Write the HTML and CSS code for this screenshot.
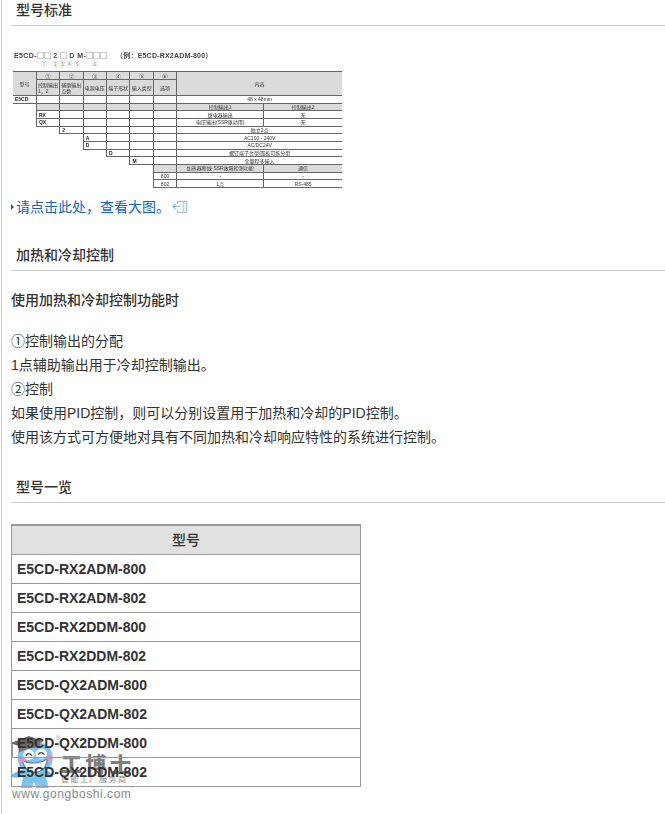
FILE: index.html
```html
<!DOCTYPE html>
<html lang="zh-CN">
<head>
<meta charset="utf-8">
<title>E5CD</title>
<link rel="stylesheet" href="styles.css">
</head>
<body>
<aside class="mark">
  <svg class="mascot" width="46" height="56" viewBox="0 0 44 54" aria-hidden="true">
    <path d="M15 33c-5 1-11 3-14 7 4 2 10 1 15-1zM33 33c4 1 8 3 10 7-4 2-8 1-11-1z" fill="#6fbce8"/>
    <path d="M15 34h19l4 17H26l-2-6-2 6H11z" fill="#7cc5ee"/>
    <ellipse cx="25" cy="22" rx="17" ry="16" fill="#7cc5ee"/>
    <path d="M1 8L19 1l14 5-16 7z" fill="#666"/>
    <path d="M3 9v12" stroke="#777" stroke-width="1" fill="none"/>
    <path d="M9 11v6q9-5 21-5V7z" fill="#777"/>
    <ellipse cx="19" cy="19" rx="5.500" ry="5" fill="#fff"/>
    <ellipse cx="31" cy="18" rx="5.500" ry="5" fill="#fff"/>
    <path d="M16 20q3-4 6 0M28 19q3-4 6 0" stroke="#444" stroke-width="1.300" fill="none"/>
    <path d="M13 25q12 5 24-2q-2 13-12 13t-12-11z" fill="#fff" stroke="#4f768e" stroke-width="1"/>
    <ellipse cx="12" cy="24" rx="3" ry="2.500" fill="#f08cba"/>
    <ellipse cx="39" cy="22" rx="3" ry="2.500" fill="#f08cba"/>
  </svg>
  <span class="mark-reg">®</span>
  <span class="mark-name">工博士</span>
  <span class="mark-sub">智能工厂服务商</span>
  <span class="mark-url">www.gongboshi.com</span>
</aside>
<main class="page">
  <h2 class="heading">型号标准</h2>
  <section class="figure">
    <div class="code">
      <span class="code-main">E5CD-<span class="box">□□</span> 2 <span class="box">□</span> D M-<span class="box">□□□</span></span>
      <span class="code-eg">（例：E5CD-RX2ADM-800）</span>
    </div>
    <div class="code-nums"><span class="num-a">①</span><span class="num-b">②③④⑤</span><span>⑥</span></div>
    <table class="spec">
      <colgroup>
        <col class="c0"><col class="cn"><col class="cn"><col class="cn"><col class="cn"><col class="cn"><col class="cn"><col class="c7"><col class="c8">
      </colgroup>
      <tr class="r8">
        <th rowspan="2">型号</th><th>①</th><th>②</th><th>③</th><th>④</th><th>⑤</th><th>⑥</th>
        <th rowspan="2" colspan="2">内容</th>
      </tr>
      <tr class="r16">
        <th class="l">控制输出<br>1，2</th><th class="l">辅助输出<br>点数</th><th>电源电压</th><th>端子形状</th><th>输入类型</th><th>选项</th>
      </tr>
      <tr><td class="b">E5CD</td><td></td><td></td><td></td><td></td><td></td><td></td><td colspan="2" class="m">48 x 48mm</td></tr>
      <tr><td class="n"></td><th></th><th></th><th></th><th></th><th></th><th></th><th>控制输出1</th><th>控制输出2</th></tr>
      <tr><td class="n"></td><td class="b">RX</td><td></td><td></td><td></td><td></td><td></td><td class="m">继电器输出</td><td class="m">无</td></tr>
      <tr><td class="n"></td><td class="b">QX</td><td></td><td></td><td></td><td></td><td></td><td class="m">电压输出(SSR驱动用)</td><td class="m">无</td></tr>
      <tr><td class="n" colspan="2"></td><td class="b">2</td><td></td><td></td><td></td><td></td><td colspan="2" class="m">独立2点</td></tr>
      <tr><td class="n" colspan="3"></td><td class="b">A</td><td></td><td></td><td></td><td colspan="2" class="m">AC100 - 240V</td></tr>
      <tr><td class="n" colspan="3"></td><td class="b">D</td><td></td><td></td><td></td><td colspan="2" class="m">AC/DC24V</td></tr>
      <tr><td class="n" colspan="4"></td><td class="b">D</td><td></td><td></td><td colspan="2" class="m">螺钉端子台型/面板可拆分型</td></tr>
      <tr><td class="n" colspan="5"></td><td class="b">M</td><td></td><td colspan="2" class="m">全量程多输入</td></tr>
      <tr><td class="n" colspan="6"></td><th></th><th>加热器断线·SSR故障检测功能</th><th>通信</th></tr>
      <tr><td class="n" colspan="6"></td><td class="m">800</td><td class="m">-</td><td class="m">-</td></tr>
      <tr><td class="n" colspan="6"></td><td class="m">802</td><td class="m">1点</td><td class="m">RS-485</td></tr>
    </table>
  </section>
  <p class="more">
    <span class="arrow"></span><a class="more-link" href="#">请点击此处，查看大图。</a>
    <svg class="zoom-ic" width="16" height="14" viewBox="0 0 16 14" aria-hidden="true">
      <path d="M5.500 4V1.500h9v11h-9V9.500" fill="none" stroke="#9cc1dc" stroke-width="1"/>
      <path d="M11.500 2v10.500" fill="none" stroke="#b5d2e6" stroke-width="1.500"/>
      <path d="M1 6.500h7M3.500 4L1 6.500 3.500 9" fill="none" stroke="#8fb9d8" stroke-width="1.200"/>
    </svg>
  </p>

  <h2 class="heading second">加热和冷却控制</h2>
  <p class="lead">使用加热和冷却控制功能时</p>
  <div class="body-text">
    <p>①控制输出的分配</p>
    <p>1点辅助输出用于冷却控制输出。</p>
    <p>②控制</p>
    <p>如果使用PID控制，则可以分别设置用于加热和冷却的PID控制。</p>
    <p>使用该方式可方便地对具有不同加热和冷却响应特性的系统进行控制。</p>
  </div>

  <h2 class="heading third">型号一览</h2>
  <table class="models">
    <tr><th>型号</th></tr>
    <tr><td>E5CD-RX2ADM-800</td></tr>
    <tr><td>E5CD-RX2ADM-802</td></tr>
    <tr><td>E5CD-RX2DDM-800</td></tr>
    <tr><td>E5CD-RX2DDM-802</td></tr>
    <tr><td>E5CD-QX2ADM-800</td></tr>
    <tr><td>E5CD-QX2ADM-802</td></tr>
    <tr><td>E5CD-QX2DDM-800</td></tr>
    <tr><td>E5CD-QX2DDM-802</td></tr>
  </table>
</main>
</body>
</html>
```
FILE: styles.css
```css
* { box-sizing: border-box; }
html, body { margin: 0; padding: 0; height: 100%; overflow: hidden; background: #fff; }
body { position: relative; font-family: "Liberation Sans", "Noto Sans CJK SC", sans-serif; font-size: 14px; color: #333; }
.page { position: relative; z-index: 1; margin-left: 1px; border-left: 1px solid #ccc; padding-left: 9px; height: 814px; }
.heading { margin: 0; padding: 0 0 0 5px; height: 26px; border-bottom: 1px solid #ccc; font-size: 14px; line-height: 21px; font-weight: 500; color: #333; }
.figure { padding: 25px 0 0 2px; height: 169px; }
.code { height: 9px; padding-left: 1px; line-height: 9px; font-size: 7px; font-weight: 700; color: #444; white-space: nowrap; filter: blur(.2px); }
.code-main { letter-spacing: .4px; }
.box { font-family: "Noto Sans CJK SC", sans-serif; font-weight: 400; letter-spacing: 0; }
.code-eg { margin-left: 7px; letter-spacing: .2px; }
.code-nums { display: flex; height: 9px; padding-left: 28px; line-height: 9px; font-size: 6px; color: #888; white-space: nowrap; }
.num-a { width: 11px; }
.num-b { width: 40px; letter-spacing: 1.300px; }
.spec { margin-top: 2px; width: 329px; border-collapse: collapse; table-layout: fixed; font-size: 5px; line-height: 6px; color: #333; filter: blur(.35px); }
.c0 { width: 23.400px; }
.cn { width: 23.400px; }
.c7 { width: 87px; }
.c8 { width: 78.200px; }
.spec tr { height: 7.670px; }
.spec .r8 { height: 8px; }
.spec .r16 { height: 16px; }
.spec th, .spec td { padding: 0; border: 1px solid #666; overflow: hidden; white-space: nowrap; font-weight: 400; text-align: center; }
.spec tr > :first-child { border-left: 0; }
.spec tr > :last-child { border-right: 0; }
.spec th { background: repeating-conic-gradient(#c4c4c4 0 25%, #f2f2f2 0 50%) 0 0 / 2px 2px; color: #333; }
.spec th.l { text-align: left; padding-left: 1px; }
.spec td.b { text-align: left; padding-left: 2px; font-weight: 700; color: #222; }
.spec td.n { border-top: 0; border-bottom: 0; }
.more { display: flex; align-items: center; margin: 0; height: 24px; }
.arrow { width: 0; height: 0; margin-right: 2px; border-left: 3px solid #2a5d8f; border-top: 3px solid transparent; border-bottom: 3px solid transparent; }
.more-link { display: block; padding-bottom: 2px; color: #1665c1; text-decoration: none; }
.zoom-ic { margin-left: 2px; }
.second { margin-top: 26px; }
.lead { margin: 0; height: 57px; padding-top: 19px; line-height: 20px; font-weight: 500; }
.body-text { height: 122px; padding-top: 1px; }
.body-text p { margin: 0; height: 24px; line-height: 24px; }
.third { margin-top: 27px; }
.models { margin-top: 21px; width: 350px; border-collapse: collapse; table-layout: fixed; }
.models th, .models td { padding: 0 0 0 5px; height: 29px; border: 1px solid #999; }
.models th { border-top: 2px solid #999; padding: 0 0 2px; background: #e1e1e1; font-size: 14px; font-weight: 500; text-align: center; }
.models td { font-size: 14px; font-weight: 700; color: #333; }
.mark { position: absolute; z-index: 0; left: 9px; top: 735px; width: 125px; height: 70px; color: #888; pointer-events: none; }
.mascot { position: absolute; left: 0; top: 0; }
.mark-reg { position: absolute; left: 47px; top: -1px; font-size: 6px; line-height: 8px; }
.mark-name { position: absolute; left: 52px; top: 15px; font-family: "Noto Sans CJK SC", sans-serif; font-size: 21px; line-height: 26px; letter-spacing: 3.500px; font-weight: 900; color: #7d7d7d; white-space: nowrap; }
.mark-sub { position: absolute; left: 52px; top: 39px; font-family: "Noto Sans CJK SC", sans-serif; font-size: 8px; line-height: 10px; letter-spacing: 1.500px; white-space: nowrap; }
.mark-url { position: absolute; left: 3px; top: 52px; font-size: 12px; line-height: 14px; letter-spacing: .55px; white-space: nowrap; }
```
